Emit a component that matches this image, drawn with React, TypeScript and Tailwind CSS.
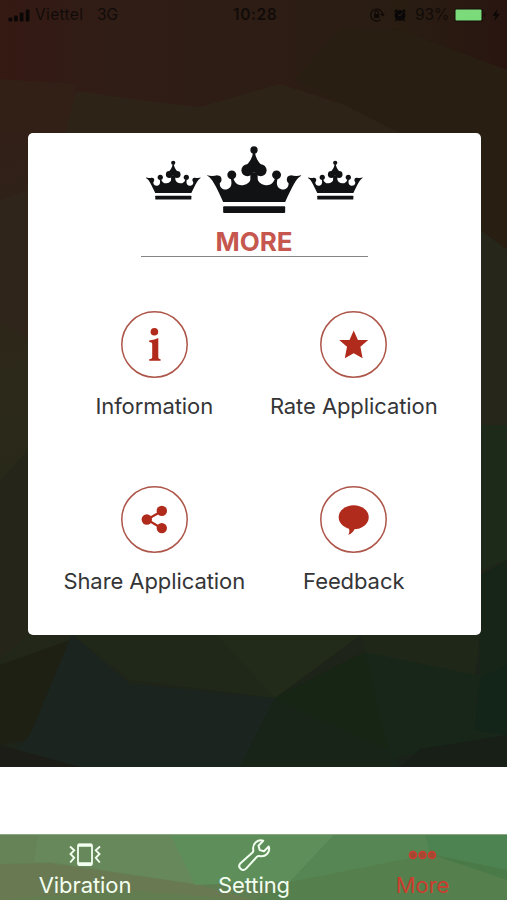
import type { ReactNode } from "react";

function Crown({ className }: { className: string }) {
  return (
    <svg viewBox="0 0 285 202" className={className} fill="#111214">
      <circle cx="141" cy="12" r="11" />
      <path d="M138 20h6c2 15 9 27 20 38l-23 24l-23-24c11-11 18-23 20-38z" />
      <circle cx="121" cy="73" r="18" />
      <circle cx="161" cy="73" r="18" />
      <path d="M130 80h22v32h-22z" />
      <circle cx="74" cy="87" r="13.5" />
      <circle cx="209" cy="87" r="13.5" />
      <circle cx="31" cy="101" r="12" />
      <circle cx="252" cy="101" r="12" />
      <path d="M0 88c10 4 22 2 31 1l7 20c-2 16 8 23 20 22c14-2 18-15 13-32l8-1c4 14 15 22 28 20c16-2 25-12 29-30h11c4 18 13 28 29 30c13 2 24-6 28-20l8 1c-5 17-1 30 13 32c12 1 22-6 20-22l7-20c9 1 21 3 31-1v2c-14 7-26 31-48 79H48C25 118 14 97 0 90z" />
      <rect x="48" y="182" width="187" height="20" rx="3" />
    </svg>
  );
}

function Backdrop() {
  return (
    <svg className="absolute inset-0 h-full w-full" viewBox="0 0 507 767" preserveAspectRatio="none">
      <defs>
        <linearGradient id="dark" x1="0" y1="0" x2="0.15" y2="1">
          <stop offset="0" stopColor="#361a14" />
          <stop offset="0.2" stopColor="#312018" />
          <stop offset="0.5" stopColor="#2c291a" />
          <stop offset="0.8" stopColor="#232819" />
          <stop offset="1" stopColor="#1b2219" />
        </linearGradient>
        <linearGradient id="top" x1="0" y1="0" x2="1" y2="0">
          <stop offset="0" stopColor="#351913" />
          <stop offset="0.22" stopColor="#301d16" />
          <stop offset="0.55" stopColor="#2d1d14" />
          <stop offset="0.8" stopColor="#291d12" />
          <stop offset="1" stopColor="#291510" />
        </linearGradient>
      </defs>
      <rect width="507" height="767" fill="url(#dark)" />
      <rect width="507" height="133" fill="url(#top)" />
      <path d="M0 79L76 84L68 133H0z" fill="#322017" />
      <path d="M76 91L170 104L200 107L280 84L345 105L400 133H65z" fill="#2e2317" />
      <path d="M295 80L340 28L400 30L507 70V133H400L345 105z" fill="#281f12" />
      <path d="M480 133L507 125V250L480 230z" fill="#281f12" />
      <path d="M480 230L507 250V425H480z" fill="#27261a" />
      <path d="M480 425H507V560L480 570z" fill="#1e2a19" />
      <path d="M480 575L507 560V767H480z" fill="#162518" />
      <path d="M0 200L28 190V340L0 320z" fill="#30251a" />
      <path d="M0 480L28 450V634L0 660z" fill="#25251a" />
      <path d="M0 665L70 640L30 740L0 745z" fill="#1e2014" />
      <path d="M72 634L130 684L275 698L240 767H0L30 735z" fill="#1b241e" />
      <path d="M72 634H362L275 698L130 680z" fill="#202819" />
      <path d="M215 634H362L275 698z" fill="#222a1a" />
      <path d="M275 698L365 652L400 767H240z" fill="#182418" />
      <path d="M275 698L365 652L390 750L320 720z" fill="#172614" />
      <path d="M365 652L480 675L507 740L390 758z" fill="#182619" />
      <path d="M362 634H480L475 675L365 652z" fill="#1f2818" />
      <path d="M480 680L507 665V735L475 730z" fill="#132419" />
      <path d="M0 745L80 767H0z" fill="#1b1d16" />
      <path d="M420 749L507 735V767H400z" fill="#171f17" />
    </svg>
  );
}

function StatusBar() {
  return (
    <div className="relative flex h-[30px] items-center pl-2 pr-1.5 text-[15.5px] text-[#110b09]">
      <svg className="h-[13px] w-[23px]" viewBox="0 0 23 13" fill="#0b0706">
        <rect x="0.5" y="8.5" width="3.8" height="4" rx="1" />
        <rect x="6" y="6.5" width="3.8" height="6" rx="1" />
        <rect x="11.7" y="3.5" width="3.8" height="9" rx="1" />
        <rect x="17.7" y="0.5" width="3.8" height="12" rx="1" />
      </svg>
      <span className="ml-[4px] w-[62px] tracking-[0.35px]">Viettel</span>
      <span className="w-[136px]">3G</span>
      <span className="w-[48px] font-semibold tracking-[0.6px]">10:28</span>
      <svg className="ml-auto h-4 w-4" viewBox="0 0 16 16" fill="none" stroke="#0f0908" strokeWidth="1.2">
        <path d="M11.5 12.6A6 6 0 1 1 13.6 8M11.8 6.9L13.7 8.6L15.2 6.6" />
        <rect x="5" y="7" width="5.4" height="4" fill="#0f0908" stroke="none" />
        <path d="M6 7V5.6a1.7 1.7 0 0 1 3.4 0V7" />
      </svg>
      <svg className="ml-[8px] mr-[1px] h-[14px] w-[14px]" viewBox="0 0 14 14">
        <circle cx="7" cy="7.4" r="5.4" fill="#0a0708" />
        <path d="M1.6 3.6L3.8 1.6M12.4 3.6L10.2 1.6M3.4 11.8L2.4 13M10.6 11.8L11.6 13" stroke="#0a0708" strokeWidth="1.6" />
        <path d="M9.4 4.8L7 7.8L5 6.8" fill="none" stroke="#30221a" />
      </svg>
      <span className="ml-[7px] w-[35px] tracking-[-0.1px]">93%</span>
      <svg className="ml-[4px] h-[14px] w-[32px]" viewBox="0 0 32 14">
        <rect x="0.5" y="0.5" width="28.5" height="13" rx="2.5" fill="#160f0a" />
        <rect x="1.5" y="1.5" width="26" height="11" rx="1" fill="#7bda79" />
        <path d="M30 4.8c1.6.8 1.6 3.6 0 4.4z" fill="#120b08" />
      </svg>
      <svg className="ml-[6px] mr-[1px] h-[12px] w-[8px]" viewBox="0 0 8 12" fill="#0b0706">
        <path d="M5.4 0L0.4 6.8H3.6L2.4 12L7.8 4.8H4.5z" />
      </svg>
    </div>
  );
}

const menuItems = [
  {
    label: "Information",
    icon: (
      <>
        <circle cx="33.4" cy="20.8" r="3.8" />
        <path d="M28.2 29.6Q34 28.8 37.3 27V46.4Q37.3 48 39.6 48.3V49.8H28.2V48.3Q31.2 48 31.2 46.4V33Q31.2 31 28.2 31z" />
      </>
    ),
  },
  {
    label: "Rate Application",
    icon: <path d="M33.7 19.4L37.9 29H48.2L40.4 35.8L42.6 47.2L33.7 42.3L24.8 47.2L27 35.8L19.2 29H29.5z" />,
  },
  {
    label: "Share Application",
    icon: (
      <>
        <path d="M41 25L26 33.5L41 42.5" fill="none" stroke="#b02b1b" strokeWidth="2.2" />
        <circle cx="25.8" cy="33.5" r="5.2" />
        <circle cx="40.8" cy="24.9" r="5.2" />
        <circle cx="40.8" cy="42.1" r="5.2" />
      </>
    ),
  },
  {
    label: "Feedback",
    icon: (
      <>
        <ellipse cx="33.7" cy="31.2" rx="15" ry="12" />
        <path d="M28.8 42L35 42.2Q32.6 47.5 28.2 48.8Q30.2 46 28.8 42z" />
      </>
    ),
  },
];

function MenuButton({ label, icon }: { label: string; icon: ReactNode }) {
  return (
    <button className="flex h-[175.5px] flex-col items-center">
      <svg className="h-[67px] w-[67px]" viewBox="0 0 67 67" fill="#b02b1b">
        <circle cx="33.5" cy="33.5" r="32.7" fill="none" stroke="#ad5548" strokeWidth="1.5" />
        {icon}
      </svg>
      <span className="mt-[12px] whitespace-nowrap text-[22px] leading-8 tracking-[-0.08px] text-[#353537]">{label}</span>
    </button>
  );
}

function TabBar() {
  return (
    <nav className="relative grid h-[66px] grid-cols-3 overflow-hidden bg-[#5c8756] text-[22px] tracking-[-0.08px] text-[#f2fff0]">
      <svg className="absolute inset-0 h-full w-full" viewBox="0 0 507 66" preserveAspectRatio="none">
        <rect width="507" height="66" fill="#658357" />
        <path d="M38 0H170L195 50L50 28L34 28z" fill="#67885a" />
        <path d="M0 30L50 29L200 51L254 66H0z" fill="#697a52" />
        <path d="M0 66L120 56L254 66z" fill="#627d50" />
        <path d="M170 0H335L290 48L195 51z" fill="#5e8f5a" />
        <path d="M335 0H507V66H254L290 48z" fill="#55804d" />
        <path d="M335 0H425L430 20L290 48z" fill="#568654" />
        <path d="M425 0H507V36L430 20z" fill="#4d8350" />
        <path d="M430 20L507 36V46z" fill="#4a7a48" />
        <path d="M200 51L290 48L254 66L230 59z" fill="#5e7d50" />
        <path d="M0 0.5H507" stroke="#8aa782" />
      </svg>
      <div className="relative flex flex-col items-center pt-[9px]">
        <svg className="h-[24px] w-[32px]" viewBox="0 0 32 24" fill="none" stroke="currentColor">
          <rect x="9" y="1.5" width="14" height="20.5" rx="1.2" strokeWidth="1.8" />
          <path d="M9 2.2H23M9 20.8H23" strokeWidth="3" />
          <path d="M1 3.5L5.2 7.3L1.5 11L5.2 14.8L1.2 19.5M31 3.5L26.8 7.3L30.5 11L26.8 14.8L30.8 19.5" strokeWidth="1.9" />
        </svg>
        <span className="ml-[1px] mt-[2px] leading-8">Vibration</span>
      </div>
      <div className="relative flex flex-col items-center pt-[5px]">
        <svg className="ml-[1px] h-[32px] w-[33px]" viewBox="0 0 33 32" fill="none" stroke="currentColor" strokeWidth="2" strokeLinejoin="round">
          <path d="M25.2 1.8C20 0 14 4.5 15.3 11.2Q15.5 12.5 14.5 13.5L2.5 24.2C-1 28.3 4.3 33.4 8.3 29.4L19 17.7Q20 16.8 21.5 17.1C27.5 18.3 32.6 13.4 30.8 7.5L26 12.2L21.7 11.1L20.5 6.8z" />
        </svg>
        <span className="-mt-[2px] ml-[1px] leading-8">Setting</span>
      </div>
      <div className="relative flex flex-col items-center pt-[16px] text-[#cb3d2e]">
        <svg className="h-[10px] w-[29px]" viewBox="0 0 29 10" fill="#a04a34" stroke="currentColor" strokeWidth="1.6">
          <circle cx="5" cy="5" r="3.5" />
          <circle cx="14.5" cy="5" r="3.5" />
          <circle cx="24" cy="5" r="3.5" />
        </svg>
        <span className="mt-[9px] leading-8">More</span>
      </div>
    </nav>
  );
}

export default function App() {
  return (
    <div className="flex h-[900px] w-[507px] flex-col overflow-hidden bg-white font-['Inter',sans-serif]">
      <main className="relative h-[767px]">
        <Backdrop />
        <StatusBar />
        <section className="relative ml-[27.5px] mt-[103px] flex h-[501.5px] w-[453px] flex-col items-center rounded-[5px] bg-white pt-[13px]">
          <div className="flex h-[68px] items-center gap-[6px]">
            <Crown className="h-[40px] w-[55px]" />
            <Crown className="h-[67px] w-[95px]" />
            <Crown className="h-[40px] w-[55px]" />
          </div>
          <h1 className="mt-[11px] h-[32.5px] w-[227px] border-b border-[#858585] text-center text-[26px] font-bold leading-9 text-[#c5574f]">
            MORE
          </h1>
          <div className="mt-[54px] grid w-[399px] grid-cols-2">
            {menuItems.map((item) => (
              <MenuButton key={item.label} {...item} />
            ))}
          </div>
        </section>
      </main>
      <div className="h-[67px] bg-white" />
      <TabBar />
    </div>
  );
}
